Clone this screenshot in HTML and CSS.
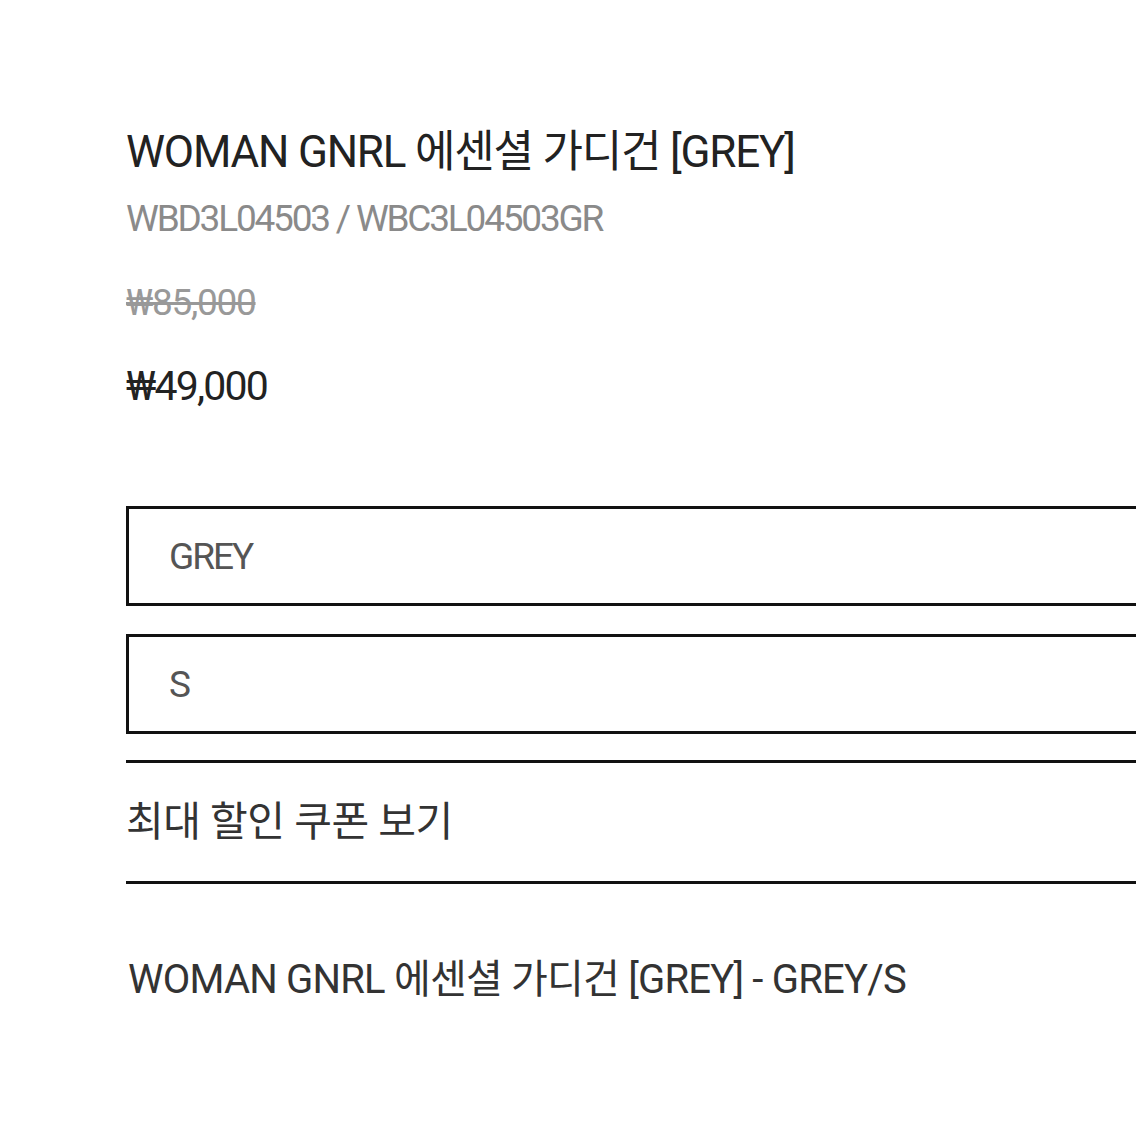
FILE: index.html
```html
<!DOCTYPE html>
<html lang="ko">
<head>
    <meta charset="UTF-8">
    <meta name="viewport" content="width=device-width, initial-scale=1.0">
    <title>WOMAN GNRL 에센셜 가디건 [GREY]</title>
    <link rel="stylesheet" href="styles.css">
</head>
<body>
    <div class="product">
        <h1 class="product-name">WOMAN GNRL 에센셜 가디건 [GREY]</h1>
        <p class="product-code">WBD3L04503 / WBC3L04503GR</p>
        <p class="price-old">₩85,000</p>
        <p class="price-now">₩49,000</p>

        <div class="options">
            <div class="option-box">GREY</div>
            <div class="option-box">S</div>
        </div>

        <div class="coupon">최대 할인 쿠폰 보기</div>

        <p class="selected">WOMAN GNRL 에센셜 가디건 [GREY] - GREY/S</p>
    </div>
</body>
</html>
```

FILE: styles.css
```css
body {
    margin: 0;
    padding: 0;
    background-color: #ffffff;
    font-family: Roboto, 'Noto Sans CJK KR', sans-serif;
    color: #222;
    overflow: hidden;
}
.product {
    padding: 124px 0 0 126px;
    margin-right: -40px;
}
.product-name {
    margin: 0;
    font-size: 44px;
    font-weight: 400;
    line-height: 56px;
    letter-spacing: -1.2px;
    color: #222;
}
.product-code {
    margin: 14px 0 0;
    font-size: 37px;
    line-height: 50px;
    letter-spacing: -2.2px;
    color: #8a8a8a;
}
.price-old {
    margin: 34px 0 0;
    font-size: 37px;
    line-height: 50px;
    letter-spacing: -1.3px;
    color: #999;
    text-decoration: line-through;
}
.price-now {
    margin: 31px 0 0;
    font-size: 41px;
    line-height: 54px;
    letter-spacing: -1.8px;
    color: #222;
}
.options {
    margin-top: 93px;
    display: flex;
    flex-direction: column;
    gap: 28px;
}
.option-box {
    height: 94px;
    border: 3px solid #111;
    padding-left: 40px;
    display: flex;
    align-items: center;
    font-size: 37px;
    letter-spacing: -2px;
    color: #555;
}
.coupon {
    margin-top: 26px;
    border-top: 3px solid #111;
    border-bottom: 3px solid #111;
    height: 124px;
    padding-bottom: 8px;
    box-sizing: border-box;
    display: flex;
    align-items: center;
    font-size: 41px;
    letter-spacing: -0.5px;
    color: #333;
}
.selected {
    margin: 70px 0 0 2px;
    font-size: 40px;
    line-height: 52px;
    letter-spacing: -0.8px;
    color: #333;
}
```
